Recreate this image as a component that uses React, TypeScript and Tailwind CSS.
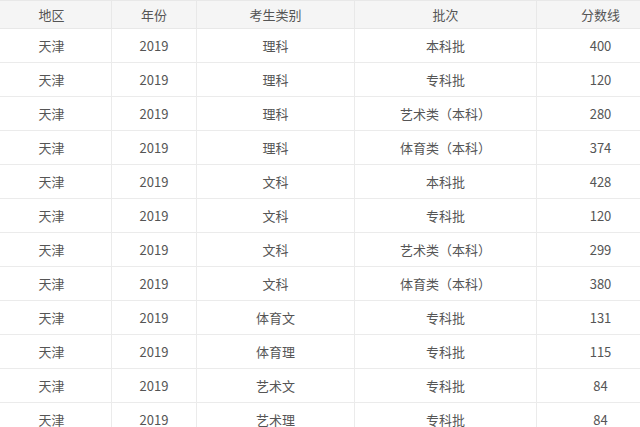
import React from 'react';

const rows = [
  ['天津', '2019', '理科', '本科批', '400'],
  ['天津', '2019', '理科', '专科批', '120'],
  ['天津', '2019', '理科', '艺术类（本科）', '280'],
  ['天津', '2019', '理科', '体育类（本科）', '374'],
  ['天津', '2019', '文科', '本科批', '428'],
  ['天津', '2019', '文科', '专科批', '120'],
  ['天津', '2019', '文科', '艺术类（本科）', '299'],
  ['天津', '2019', '文科', '体育类（本科）', '380'],
  ['天津', '2019', '体育文', '专科批', '131'],
  ['天津', '2019', '体育理', '专科批', '115'],
  ['天津', '2019', '艺术文', '专科批', '84'],
  ['天津', '2019', '艺术理', '专科批', '84'],
];

const headers = ['地区', '年份', '考生类别', '批次', '分数线'];
const widths = ['w-[120px]', 'w-[85px]', 'w-[158px]', 'w-[182px]', 'w-[128px]'];

export default function App() {
  return (
    <div className="w-[640px] h-[427px] overflow-hidden bg-white">
      <table
        className="ml-[-9px] w-[673px] table-fixed border-collapse text-[13px] text-[#555]"
        style={{ fontFamily: '"Microsoft YaHei", "Noto Sans CJK SC", sans-serif' }}
      >
        <colgroup>
          {widths.map((w, i) => (
            <col key={i} className={w} />
          ))}
        </colgroup>
        <thead>
          <tr className="h-[28px] bg-[#f5f5f5]">
            {headers.map((h, i) => (
              <th key={i} className="border border-[#e8e8e8] font-normal text-center p-0">
                {h}
              </th>
            ))}
          </tr>
        </thead>
        <tbody>
          {rows.map((r, i) => (
            <tr key={i} className="h-[34px]">
              {r.map((c, j) => (
                <td key={j} className="border border-[#ebebeb] text-center p-0">
                  {c}
                </td>
              ))}
            </tr>
          ))}
        </tbody>
      </table>
    </div>
  );
}
